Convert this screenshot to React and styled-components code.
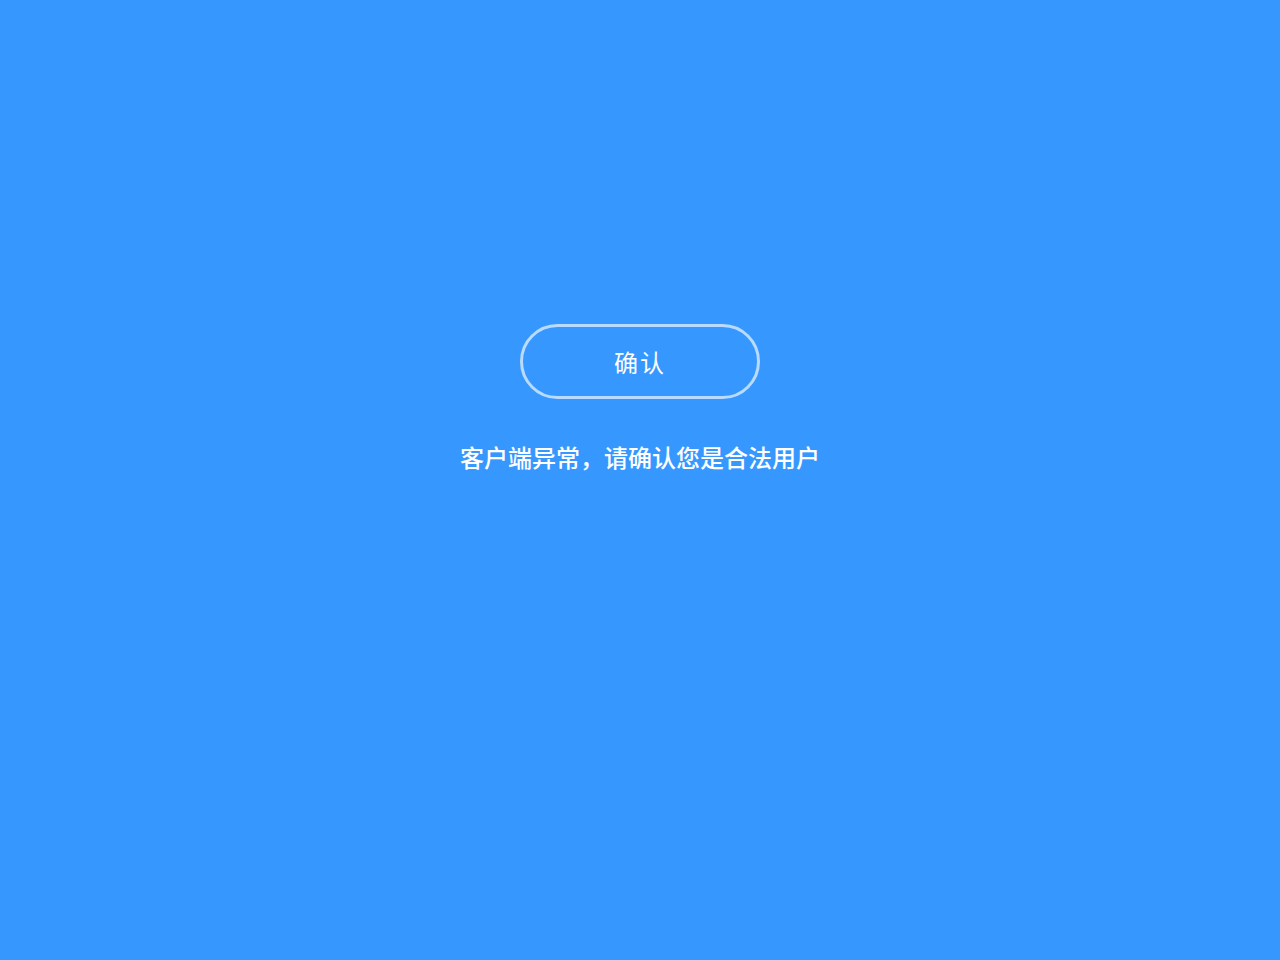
import React from "react";
import styled, { createGlobalStyle } from "styled-components";

const Global = createGlobalStyle`
  html, body { margin: 0; padding: 0; background: #3698ff; }
  body { font-family: "Noto Sans CJK SC", "Liberation Sans", sans-serif; }
`;

const Page = styled.div`
  min-height: 960px;
  background: #3698ff;
  display: flex;
  flex-direction: column;
  align-items: center;
  padding-top: 324px;
  box-sizing: border-box;
`;

const ConfirmButton = styled.button`
  width: 240px;
  height: 75px;
  box-sizing: border-box;
  border: 3px solid rgba(255, 255, 255, 0.65);
  border-radius: 38px;
  background: transparent;
  color: #fff;
  font-family: "Noto Sans CJK SC", sans-serif;
  font-size: 24px;
  letter-spacing: 2px;
  cursor: pointer;
  display: flex;
  align-items: center;
  justify-content: center;
  padding: 0;
`;

const Message = styled.p`
  margin: 40px 0 0;
  color: #fff;
  font-size: 24px;
  line-height: 36px;
  font-weight: 500;
`;

export default function App() {
  return (
    <>
      <Global />
      <Page>
        <ConfirmButton>确认</ConfirmButton>
        <Message>客户端异常，请确认您是合法用户</Message>
      </Page>
    </>
  );
}
